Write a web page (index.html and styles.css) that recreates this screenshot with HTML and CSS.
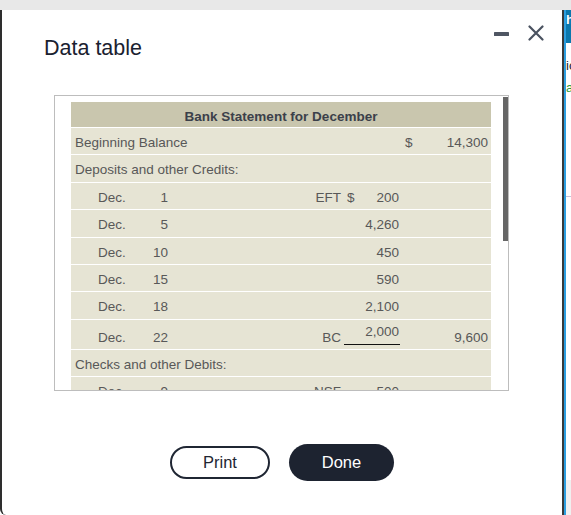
FILE: index.html
```html
<!DOCTYPE html>
<html lang="en">
<head>
<meta charset="utf-8">
<title>Data table</title>
<link rel="stylesheet" href="styles.css">
</head>
<body>
<div class="topbar"></div>
<div class="main">
  <section class="dialog">
    <header class="dlg-head">
      <h1 class="title">Data table</h1>
      <div class="controls">
        <svg class="ic" width="15" height="16" viewBox="0 0 15 16" aria-label="Minimize"><rect x="0" y="7" width="15" height="4" rx="0.6" fill="#4f5663"/></svg>
        <svg class="ic" width="16" height="16" viewBox="0 0 16 16" aria-label="Close"><path d="M1.5 1.5 L14.5 14.5 M14.5 1.5 L1.5 14.5" stroke="#4a5260" stroke-width="2.2" stroke-linecap="round"/></svg>
      </div>
    </header>
    <div class="frame">
      <div class="frame-content">
        <div class="stmt">
          <div class="r head"><span class="hcell">Bank Statement for December</span></div>
          <div class="r"><span class="lab">Beginning Balance</span><span class="cur2">$</span><span class="tot">14,300</span></div>
          <div class="r"><span class="lab">Deposits and other Credits:</span></div>
          <div class="r"><span class="mon">Dec.</span><span class="day">1</span><span class="ref">EFT</span><span class="cur">$</span><span class="amt">200</span></div>
          <div class="r"><span class="mon">Dec.</span><span class="day">5</span><span class="amt">4,260</span></div>
          <div class="r"><span class="mon">Dec.</span><span class="day">10</span><span class="amt">450</span></div>
          <div class="r"><span class="mon">Dec.</span><span class="day">15</span><span class="amt">590</span></div>
          <div class="r"><span class="mon">Dec.</span><span class="day">18</span><span class="amt">2,100</span></div>
          <div class="r tall"><span class="mon">Dec.</span><span class="day">22</span><span class="ref">BC</span><span class="ul">2,000</span><span class="tot">9,600</span></div>
          <div class="r"><span class="lab">Checks and other Debits:</span></div>
          <div class="r"><span class="mon">Dec.</span><span class="day">9</span><span class="ref">NSF</span><span class="amt">500</span></div>
        </div>
      </div>
      <div class="track"><div class="thumb"></div></div>
    </div>
    <div class="actions">
      <button class="btn btn-outline" type="button">Print</button>
      <button class="btn btn-solid" type="button">Done</button>
    </div>
  </section>
  <aside class="behind">
    <div class="b-top">h</div>
    <div class="b-text">ic</div>
    <div class="b-green">a</div>
    <div class="b-line"></div>
    <div class="b-foot"></div>
  </aside>
</div>
</body>
</html>
```
FILE: styles.css
```css
* {
  box-sizing: border-box;
  margin: 0;
  padding: 0;
}

html,
body {
  height: 100%;
}

body {
  font-family: "Liberation Sans", Arial, sans-serif;
  background: #fff;
  overflow: hidden;
}

.topbar {
  height: 10px;
  background: #e8e8e8;
}

.main {
  display: flex;
  height: 505px;
}

/* ---------- dialog ---------- */
.dialog {
  width: 564px;
  flex: none;
  background: #fff;
  border-left: 2px solid #2e2e2e;
  border-right: 2px solid #3a3a3a;
  border-bottom-left-radius: 6px;
  display: flex;
  flex-direction: column;
}

.dlg-head {
  display: flex;
  align-items: flex-start;
  padding: 15px 18px 0 42px;
}

.title {
  flex: 1;
  margin-top: 10px;
  font-size: 21.5px;
  line-height: 26px;
  font-weight: 400;
  color: #1a2130;
}

.controls {
  display: flex;
  gap: 19px;
}

.ic {
  display: block;
}

/* ---------- scroll frame ---------- */
.frame {
  margin: 34px 0 0 52px;
  width: 455px;
  height: 296px;
  border: 1px solid #bdbdbd;
  display: flex;
  overflow: hidden;
}

.frame-content {
  flex: 1;
  padding: 6px 0 0 16px;
  overflow: hidden;
}

.track {
  width: 5px;
  flex: none;
  padding-top: 1px;
}

.thumb {
  height: 144px;
  background: #666;
}

/* ---------- statement table ---------- */
.stmt {
  width: 420px;
  font-size: 13.5px;
  line-height: 16px;
  color: #585858;
}

.r {
  display: grid;
  grid-template-columns: 69px 31px 173px 18px 38px 15px 76px;
  align-items: start;
  height: 27.4px;
  padding-top: 7px;
  background: #e6e4d4;
  border-bottom: 1px solid #fff;
  white-space: nowrap;
}

.r.head {
  height: 26px;
  background: #c9c6ae;
  font-weight: 700;
  color: #3b404a;
}

.hcell {
  grid-column: 1 / 8;
  text-align: center;
}

.lab {
  grid-column: 1 / 4;
  padding-left: 4px;
}

.mon {
  grid-column: 1;
  padding-left: 27px;
}

.day {
  grid-column: 2;
  text-align: right;
  padding-right: 3px;
}

.ref {
  grid-column: 3;
  text-align: right;
  padding-right: 3px;
}

.cur {
  grid-column: 4;
  padding-left: 3px;
}

.amt {
  grid-column: 5;
  text-align: right;
  padding-right: 1px;
}

.cur2 {
  grid-column: 6;
  padding-left: 5px;
}

.tot {
  grid-column: 7;
  text-align: right;
  padding-right: 3px;
}

.r.tall {
  height: 30px;
  padding-top: 0;
}

.r.tall > span {
  margin-top: 10px;
}

.r.tall > .ul {
  grid-column: 4 / 6;
  margin-top: 4px;
  padding: 0 1px 4px 0;
  border-bottom: 1px solid #111;
  text-align: right;
}

/* ---------- buttons ---------- */
.actions {
  display: flex;
  justify-content: center;
  align-items: center;
  gap: 19px;
  margin-top: 53px;
}

.btn {
  font-family: "Liberation Sans", Arial, sans-serif;
  font-size: 16.5px;
  border-radius: 20px;
  cursor: pointer;
}

.btn-outline {
  width: 100px;
  height: 33px;
  border: 2px solid #1f2633;
  background: #fff;
  color: #1f2633;
}

.btn-solid {
  width: 105px;
  height: 37px;
  border: none;
  background: #1d2330;
  color: #fff;
}

/* ---------- page behind the dialog ---------- */
.behind {
  flex: 1;
  border-left: 2px solid #2c9ee0;
  display: flex;
  flex-direction: column;
  overflow: hidden;
  background: #fff;
  font-size: 13px;
  line-height: 16px;
  white-space: nowrap;
}

.b-top {
  height: 33px;
  background: #0b78ad;
  color: #fff;
  font-weight: 700;
  padding-top: 2px;
}

.b-text {
  margin-top: 15px;
  color: #222;
}

.b-green {
  margin-top: 6px;
  color: #2e9a3a;
}

.b-line {
  margin-top: 100px;
  border-top: 1px solid #c9c2da;
}

.b-foot {
  margin-top: auto;
  height: 35px;
  background: #f0f0f0;
}
```
